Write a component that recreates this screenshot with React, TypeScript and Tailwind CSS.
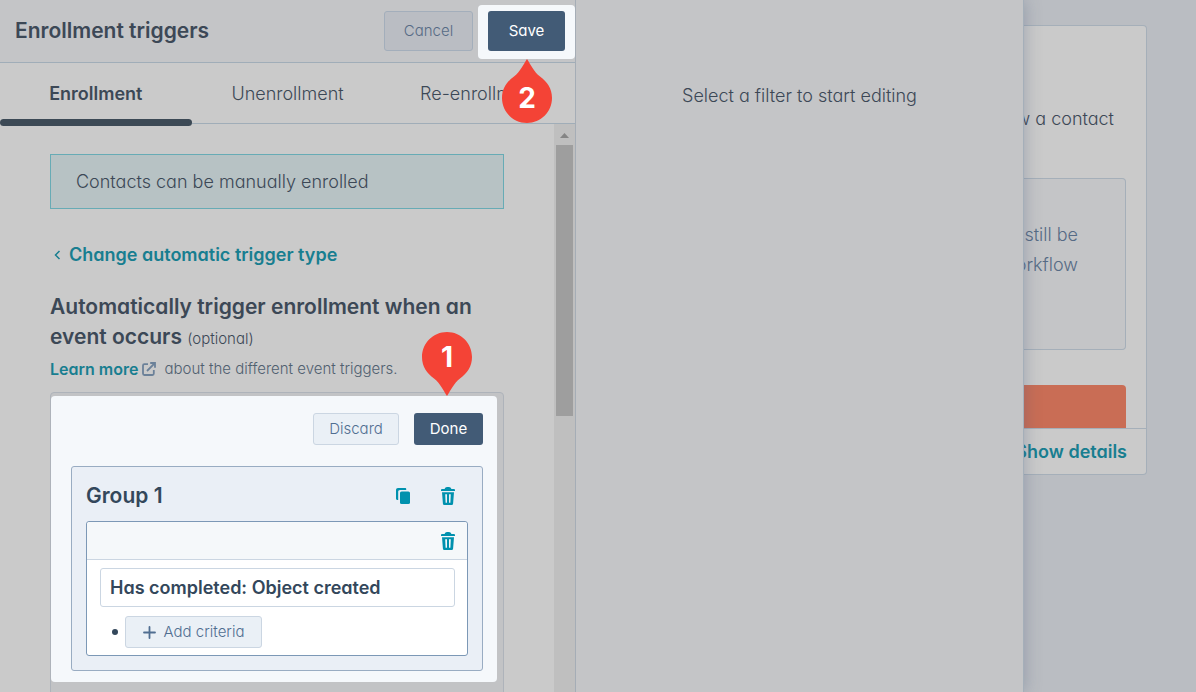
import type { ReactNode } from "react";

function TrashIcon() {
  return (
    <svg width="14" height="18" viewBox="0 0 14 18" aria-hidden="true">
      <path fill="#0091ae" d="M3.600 2C4 .8 4.900 0 6 0h2c1.100 0 2 .8 2.400 2h2.400c.7 0 1.200.6 1.200 1.200v.8H0v-.8C0 2.600.5 2 1.200 2z" />
      <path
        fill="#0091ae"
        fillRule="evenodd"
        d="M1 5.200h12l-.9 11.200c-.1.900-.8 1.600-1.700 1.600H3.600c-.9 0-1.600-.7-1.700-1.600zM4.200 7.200l.4 8.600H6V7.200zm3.800 0v8.600h1.400l.4-8.600z"
      />
    </svg>
  );
}

function CopyIcon() {
  return (
    <svg width="14" height="16" viewBox="0 0 14 16" aria-hidden="true">
      <path fill="#0091ae" d="M2 0h7.200c.6 0 1 .4 1 1v1H4C2.900 2 2.200 2.700 2.200 3.800V12H1.500C.6 12 0 11.400 0 10.500V2C0 .8.800 0 2 0z" />
      <rect x="4" y="3.400" width="10" height="12.600" rx="1.600" fill="#0091ae" />
    </svg>
  );
}

function ExternalIcon() {
  return (
    <svg width="14" height="14" viewBox="0 0 14 14" fill="none" stroke="#6b8199" strokeWidth="1.800" aria-hidden="true">
      <path d="M6 2.200H2.400c-.8 0-1.400.6-1.400 1.400v8c0 .8.600 1.400 1.400 1.400h8c.8 0 1.400-.6 1.400-1.400V8" />
      <path d="M8.200 1H13v4.800M12.800 1.200 5 9" />
    </svg>
  );
}

function Pin({ label, up, className }: { label: string; up?: boolean; className: string }) {
  return (
    <div className={`pointer-events-none absolute z-20 h-16 w-[50px] ${className}`}>
      <svg width="50" height="64" viewBox="0 0 50 64" className={up ? "rotate-180" : ""} aria-hidden="true">
        <path
          fill="#f44336"
          d="M25 0C11.200 0 0 11.200 0 25c0 9.500 5 16.500 12 21.500 6 4.500 9 11.500 13 17.500 4-6 7-13 13-17.500C45 41.500 50 34.500 50 25 50 11.200 38.800 0 25 0z"
        />
      </svg>
      <span
        className={`absolute inset-x-0 flex h-[50px] items-center justify-center text-[28px] font-bold text-white ${up ? "bottom-0" : "top-0"}`}
      >
        {label}
      </span>
    </div>
  );
}

function Tab({ children, active }: { children: ReactNode; active?: boolean }) {
  return (
    <button
      type="button"
      role="tab"
      aria-selected={!!active}
      className={`relative h-[60px] flex-1 pt-[2px] text-lg whitespace-nowrap ${active ? "font-semibold" : "font-light"}`}
    >
      {children}
      {active && <span className="absolute inset-x-0 -bottom-[3px] h-[7px] rounded-full bg-[#3c4955]" />}
    </button>
  );
}

export default function App() {
  return (
    <div className="flex h-screen overflow-hidden bg-[#babdc2] font-['Inter','Liberation_Sans',sans-serif] text-[#3c4856] [font-feature-settings:'cv11']">
      <div className="z-10 flex min-w-0 flex-1 border-r border-[#a5afb9] shadow-[0_0_16px_rgba(70,90,120,0.35)]">
        <section className="flex w-[576px] shrink-0 flex-col border-r border-[#a5adb6] bg-[#cacaca]">
          <header className="flex h-[63px] shrink-0 items-start border-b border-[#a0adb8] bg-[#c4c5c7] pt-[5px] pl-[15px]">
            <h1 className="flex-1 text-[21px] leading-[52px] font-semibold">Enrollment triggers</h1>
            <button
              type="button"
              className="mt-1.5 mr-[5px] h-10 w-[89px] rounded-[3px] border border-[#a3aebb] bg-[#babdc3] text-[15px] font-light text-[#566b85]"
            >
              Cancel
            </button>
            <div className="relative rounded bg-[#f5f8fb] px-2.5 pt-1.5 pb-2">
              <button type="button" className="block h-10 w-[77px] rounded-[3px] bg-[#425b76] text-[15px] text-white">
                Save
              </button>
              <Pin label="2" up className="top-[54px] left-6" />
            </div>
          </header>
          <div role="tablist" className="flex shrink-0 border-b border-[#a0adb8]">
            <Tab active>Enrollment</Tab>
            <Tab>Unenrollment</Tab>
            <Tab>Re-enrollment</Tab>
          </div>
          <div className="flex min-h-0 flex-1">
            <div className="flex min-w-0 flex-1 flex-col overflow-hidden pt-[30px] pr-[50px] pl-[50px]">
              <div className="shrink-0 border border-[#67abb5] bg-[#b7c2c4] px-[25px] text-lg leading-[53px] font-light">
                Contacts can be manually enrolled
              </div>
              <a href="#types" className="mt-[31px] flex shrink-0 items-center gap-2 pl-1 text-lg leading-[30px] font-semibold text-[#187e90]">
                <svg width="7" height="10" viewBox="0 0 7 10" fill="none" stroke="#187e90" strokeWidth="1.500" aria-hidden="true">
                  <path d="M5.500 1 1.500 5l4 4" />
                </svg>
                Change automatic trigger type
              </a>
              <h2 className="mt-[22px] shrink-0 text-[21px] leading-[30px] font-semibold whitespace-nowrap">
                Automatically trigger enrollment when an
                <br />
                event occurs <span className="text-[15px] font-light">(optional)</span>
              </h2>
              <p className="mt-[3px] flex shrink-0 items-center text-[15px] leading-6 font-light text-[#506070]">
                <a href="#learn" className="mr-2 flex items-center gap-1 text-base leading-6 font-semibold text-[#187e90]">
                  Learn more
                  <ExternalIcon />
                </a>
                about the different event triggers.
              </p>
              <div className="mt-[11px] h-[400px] shrink-0 rounded border border-[#aeb3ba] bg-[#c2c3c5] pt-[3px] pr-1.5">
                <div className="rounded bg-[#f5f8fb] px-5 pt-[17px] pb-[11px]">
                  <div className="relative -mr-1.5 flex justify-end gap-[15px]">
                    <button
                      type="button"
                      className="h-8 w-[86px] rounded-[3px] border border-[#cbd6e2] bg-[#eaf0f6] text-[15px] font-light text-[#506e91]"
                    >
                      Discard
                    </button>
                    <button type="button" className="h-8 w-[69px] rounded-[3px] bg-[#425b76] text-[15px] text-white">
                      Done
                    </button>
                    <Pin label="1" className="-top-[81px] right-[11px]" />
                  </div>
                  <div className="mt-[21px] -mr-1.5 rounded-[3px] border border-[#99acc2] bg-[#eaeff6] px-3.5 pb-3.5 text-[#33475b]">
                    <div className="flex h-[54px] items-center pt-1">
                      <h3 className="flex-1 text-[21px] font-semibold">Group 1</h3>
                      <button type="button" aria-label="Duplicate group" className="mr-[31px]">
                        <CopyIcon />
                      </button>
                      <button type="button" aria-label="Delete group" className="mr-[13px]">
                        <TrashIcon />
                      </button>
                    </div>
                    <div className="rounded-[3px] border border-[#7c98b6] bg-white">
                      <div className="flex h-[38px] items-center justify-end rounded-t-[3px] border-b border-[#cbd6e2] bg-[#f5f8fa] pr-3">
                        <button type="button" aria-label="Delete filter">
                          <TrashIcon />
                        </button>
                      </div>
                      <div className="pt-2 pr-3 pb-[7px] pl-[13px]">
                        <div className="rounded-[3px] border border-[#cbd6e2] px-[9px] text-lg leading-[37px] font-semibold">
                          Has completed: Object created
                        </div>
                        <div className="mt-[9px] flex items-center gap-[7px] pl-3">
                          <span className="size-1.5 rounded-full bg-[#33475b]" />
                          <button
                            type="button"
                            className="flex h-8 w-[137px] items-center justify-center gap-2 rounded-[3px] border border-[#cbd6e2] bg-[#eaf0f6] text-[15px] font-light text-[#506e91]"
                          >
                            <svg width="13" height="13" viewBox="0 0 13 13" stroke="#506e91" strokeWidth="1.800" strokeLinecap="round" aria-hidden="true">
                              <path d="M6.500 1v11M1 6.500h11" />
                            </svg>
                            Add criteria
                          </button>
                        </div>
                      </div>
                    </div>
                  </div>
                </div>
              </div>
            </div>
            <div aria-hidden="true" className="flex w-[21px] shrink-0 flex-col items-center bg-[#bfbfbf]">
              <svg width="9" height="21" viewBox="0 0 9 21">
                <path fill="#858585" d="M4.500 9 9 14H0z" />
              </svg>
              <div className="h-[271px] w-[17px] bg-[#9e9e9e]" />
            </div>
          </div>
        </section>
        <section className="min-w-0 flex-1 bg-[#c4c5c7] pt-[82px] text-center text-lg leading-7 font-light">
          Select a filter to start editing
        </section>
      </div>
      <aside className="w-[172px] shrink-0 overflow-hidden pt-[25px] pr-[49px] text-lg font-light whitespace-nowrap">
        <div className="rounded-r border-y border-r border-[#a5afb9] bg-[#cacaca]">
          <div className="pt-[78px] pr-5">
            <p className="flex justify-end pr-3 leading-[30px]">w a contact</p>
            <div className="mt-11 h-[172px] rounded-r border-y border-r border-[#a5afb9] bg-[#c4c5c7] pt-[41px] pr-[47px] leading-[30px] text-[#566b85]">
              <p className="flex justify-end">still be</p>
              <p className="flex justify-end">workflow</p>
            </div>
            <div className="mt-[35px] h-[43px] rounded-tr bg-[#c96d55]" />
          </div>
          <div className="flex justify-end border-t border-[#a5afb9] pr-[19px]">
            <a href="#details" className="leading-[45px] font-semibold text-[#187e90]">
              Show details
            </a>
          </div>
        </div>
      </aside>
    </div>
  );
}
